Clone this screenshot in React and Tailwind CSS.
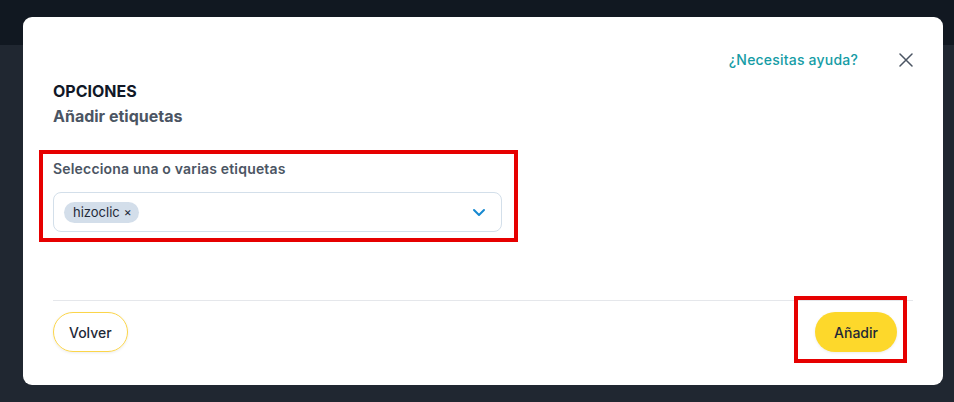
import React from "react";

export default function App() {
  return (
    <div className="relative h-[402px] w-[954px] overflow-hidden bg-[#202731] font-['Inter',sans-serif]">
      <div className="h-[45px] w-full bg-[#111821]" />
      <div className="absolute left-[23px] top-[17px] flex h-[368px] w-[920px] flex-col rounded-[9px] bg-white px-[30px]">
        {/* header */}
        <div className="flex h-[24px] items-center justify-end pt-0 mt-[31px]">
          <a className="text-[14px] font-medium leading-[20px] tracking-[0.2px] text-[#159ca5]">¿Necesitas ayuda?</a>
          <button className="ml-[38px] mr-[-3px] flex h-[20px] w-[20px] items-center justify-center text-[#4b5563]">
            <svg width="14" height="14" viewBox="0 0 14 14" fill="none" stroke="currentColor" strokeWidth="1.5" strokeLinecap="round">
              <path d="M1 1L13 13M13 1L1 13" />
            </svg>
          </button>
        </div>
        <h2 className="mt-[7px] text-[16px] font-bold leading-[24px] text-[#111827]">OPCIONES</h2>
        <h3 className="mt-[1px] text-[16px] font-bold leading-[24px] text-[#4b5563]">Añadir etiquetas</h3>

        {/* field */}
        <div className="relative mt-[31px] w-[449px]">
          <span className="pointer-events-none absolute -left-[14px] -right-[16px] -top-[9px] -bottom-[10px] border-4 border-[#e60000]" />
          <label className="block text-[14px] font-semibold leading-[20px] tracking-[0.18px] text-[#4b5563]">Selecciona una o varias etiquetas</label>
          <div className="mt-[13px] flex h-[40px] items-center justify-between rounded-[8px] border border-[#d3dfea] pl-[10px] pr-[15px]">
            <span className="flex h-[21px] items-center rounded-full bg-[#d3deea] pl-[9px] pr-[7px] text-[13px] leading-none text-[#1f2937]">
              hizoclic<span className="ml-[4px] text-[12px]">×</span>
            </span>
            <svg width="14" height="9" viewBox="0 0 14 9" fill="none" stroke="#1789d0" strokeWidth="2" strokeLinecap="round" strokeLinejoin="round">
              <path d="M2 2l5 5 5-5" />
            </svg>
          </div>
        </div>

        {/* footer */}
        <div className="mt-[68px] border-t border-[#e5e7eb]" />
        <div className="flex items-center justify-between pt-[11px] pr-[16px]">
          <button className="h-[40px] rounded-full border border-[#fbd54a] px-[15px] text-[14px] font-medium text-[#1f2937] shadow-[0_1px_3px_rgba(0,0,0,0.08)]">
            Volver
          </button>
          <div className="relative">
            <span className="pointer-events-none absolute -left-[21px] -right-[10px] -top-[16px] -bottom-[11px] border-4 border-[#e60000]" />
            <button className="h-[40px] w-[82px] rounded-full bg-[#fdd82b] text-[14px] font-medium text-[#1f2937] shadow-[0_1px_3px_rgba(0,0,0,0.08)]">
              Añadir
            </button>
          </div>
        </div>
      </div>
    </div>
  );
}
